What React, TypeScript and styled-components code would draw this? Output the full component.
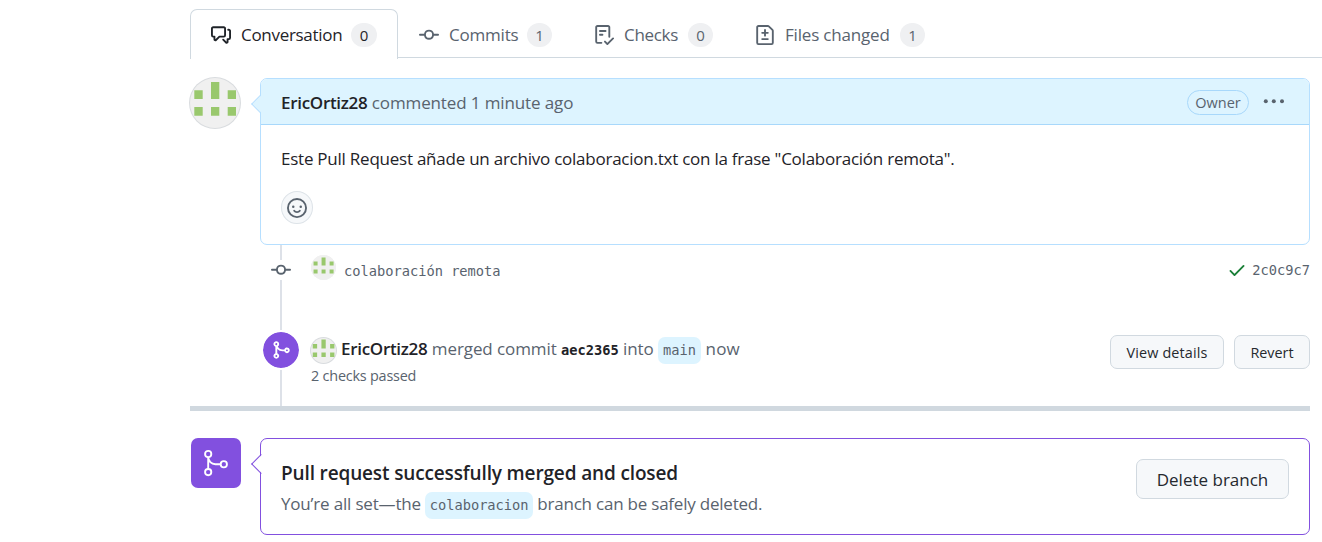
import React from 'react';
import styled, { createGlobalStyle, css } from 'styled-components';

const SANS = '"Open Sans", "Noto Sans", sans-serif';
const MONO = '"DejaVu Sans Mono", "Liberation Mono", monospace';

const GlobalStyle = createGlobalStyle`
  * { box-sizing: border-box; }
  body {
    margin: 0;
    background: #fff;
    color: #1f2328;
    font-family: ${SANS};
    font-size: 17px;
    overflow: hidden;
  }
`;

const Page = styled.main`
  width: 1322px;
  height: 542px;
  padding-left: 190px;
`;

const Icon = styled.svg`
  display: block;
  flex: none;
  fill: currentColor;
`;

/* One run of text; track is its letter-spacing, rise lifts it (or lowers it) inside a centred row */
const Text = styled.span<{ $size?: number; $track?: number; $weight?: number; $color?: string; $mono?: boolean; $rise?: number }>`
  white-space: pre;
  font-family: ${p => (p.$mono ? MONO : SANS)};
  font-size: ${p => p.$size ?? (p.$mono ? 13.7 : 17)}px;
  letter-spacing: ${p => p.$track ?? 0}px;
  font-weight: ${p => p.$weight ?? 400};
  color: ${p => p.$color ?? '#59636e'};
  padding-bottom: ${p => Math.max(0, p.$rise ?? 0) * 2}px;
  padding-top: ${p => Math.max(0, -(p.$rise ?? 0)) * 2}px;
`;

const TabBar = styled.nav`
  display: flex;
  height: 58px;
  padding-top: 9px;
  border-bottom: 1px solid #d0d9e0;
`;

const Tab = styled.div<{ $width: number; $active?: boolean }>`
  display: flex;
  align-items: center;
  width: ${p => p.$width}px;
  height: 50px;
  padding: 2px 0 0 21px;
  color: #59636e;
  ${p => p.$active && css`
    color: #1f2328;
    background: #fff;
    border: 1px solid #d0d9e0;
    border-bottom: 0;
    border-radius: 7px 7px 0 0;
    padding-left: 20px;
    padding-top: 1px;
  `}
`;

const TabLabel = styled.div<{ $width: number }>`
  width: ${p => p.$width}px;
  margin-left: 10px;
  line-height: 24px;
`;

const Counter = styled.span<{ $strong?: boolean }>`
  min-width: ${p => (p.$strong ? 26 : 25)}px;
  height: 24px;
  padding: 0 8px;
  border-radius: 12px;
  background: #eff0f2;
  color: ${p => (p.$strong ? '#1f2328' : '#59636e')};
  font-size: 15px;
  font-weight: 500;
  line-height: 24px;
  text-align: center;
`;

const Entry = styled.section<{ $top: number }>`
  display: flex;
  align-items: flex-start;
  width: 1120px;
  padding-top: ${p => p.$top}px;
`;

const AuthorSlot = styled.div`
  width: 70px;
  margin-top: -1px;
  margin-left: -1px;
  margin-right: 1px;
`;

const Bubble = styled.article<{ $line: string; $tip: string }>`
  position: relative;
  width: 1050px;
  border: 1px solid ${p => p.$line};
  border-radius: 7px;
  background: #fff;
  &::before {
    content: '';
    position: absolute;
    left: -7.5px;
    top: 17.5px;
    width: 13px;
    height: 13px;
    transform: rotate(45deg);
    border-left: 1px solid ${p => p.$line};
    border-bottom: 1px solid ${p => p.$line};
    background: linear-gradient(45deg, ${p => p.$tip} 51%, transparent 51%);
  }
`;

const BubbleHeader = styled.header`
  position: relative;
  display: flex;
  align-items: center;
  height: 46px;
  padding: 1px 22px 0 20px;
  background: #ddf4ff;
  border-bottom: 1px solid #a8d8fb;
  border-radius: 6px 6px 0 0;
`;

const OwnerBadge = styled.span`
  width: 62px;
  height: 25px;
  margin-left: auto;
  border: 1px solid #a8d8fb;
  border-radius: 13px;
  text-align: center;
  line-height: 22px;
`;

const BubbleBody = styled.div`
  height: 119px;
  padding: 20px 20px 0;
  line-height: 27px;
`;

const ReactionButton = styled.button`
  display: flex;
  align-items: center;
  justify-content: center;
  width: 32px;
  height: 33px;
  margin: 19px 0 0;
  padding: 0;
  border: 1px solid #dde3e8;
  border-radius: 50%;
  background: #f6f8fa;
  color: #59636e;
`;

const Timeline = styled.section`
  position: relative;
  width: 1120px;
  height: 161px;
  &::before {
    content: '';
    position: absolute;
    left: 90px;
    top: 0;
    bottom: 0;
    width: 2px;
    background: #dde1e8;
  }
`;

const CommitRow = styled.div`
  position: relative;
  display: flex;
  align-items: center;
  height: 87px;
  padding: 0 0 38px 81px;
`;

const CommitMark = styled.span`
  width: 20px;
  background: #fff;
  color: #59636e;
  margin-right: 20px;
`;

const CommitHash = styled.span`
  display: flex;
  align-items: center;
  gap: 5px;
  margin-left: auto;
  color: #1a7f37;
`;

const MergeRow = styled.div`
  position: relative;
  display: flex;
  align-items: flex-start;
  padding-left: 71px;
`;

const MergeMark = styled.span`
  display: flex;
  align-items: center;
  justify-content: center;
  width: 40px;
  height: 40px;
  margin-top: -2px;
  border: 2px solid #fff;
  border-radius: 50%;
  background: #8250df;
  background-clip: padding-box;
  color: #fff;
`;

const MergeInfo = styled.div`
  margin-left: 9px;
  padding-top: 3px;
`;

const MergeLine = styled.div`
  display: flex;
  align-items: center;
  height: 30px;
`;

const CheckLine = styled.div`
  height: 22px;
  padding-left: 1px;
  line-height: 20px;
`;

const Branch = styled.span<{ $width: number }>`
  display: inline-block;
  width: ${p => p.$width}px;
  height: 27px;
  border-radius: 7px;
  background: #ddf4ff;
  line-height: 24px;
  text-align: center;
`;

const Actions = styled.div`
  display: flex;
  gap: 10px;
  margin: 3px 0 0 auto;
`;

const Button = styled.button<{ $width: number; $height: number }>`
  width: ${p => p.$width}px;
  height: ${p => p.$height}px;
  padding: 1px 0 0;
  border: 1px solid #d1d9e0;
  border-radius: 7px;
  background: #f6f8fa;
  white-space: nowrap;
`;

const Divider = styled.div`
  width: 1120px;
  height: 5px;
  background: #d0d8df;
`;

const MergeTile = styled.div`
  display: flex;
  align-items: center;
  justify-content: center;
  width: 50px;
  height: 50px;
  margin: 0 19px 0 1px;
  border-radius: 7px;
  background: #8250df;
`;

const MergedBody = styled.div`
  display: flex;
  align-items: flex-start;
  height: 95px;
  padding: 20px 20px 0;
`;

const MergedTitle = styled.h3`
  margin: 0 0 5px;
  height: 28px;
  line-height: 28px;
`;

const MergedNote = styled.div`
  display: flex;
  align-items: center;
  height: 27px;
`;

const SummaryCol = styled.div`
  flex: 1;
`;

const MoreSlot = styled.span`
  margin-left: 12px;
  color: #59636e;
`;

const AvatarGap = styled.span<{ $gap: number; $rise?: number }>`
  margin-right: ${p => p.$gap}px;
  padding-bottom: ${p => (p.$rise ?? 0) * 2}px;
`;

const PATHS = {
  discussion: 'M1.75 1h8.5c.966 0 1.75.784 1.75 1.75v5.5A1.75 1.75 0 0 1 10.25 10H7.061l-2.574 2.573A1.458 1.458 0 0 1 2 11.543V10h-.25A1.75 1.75 0 0 1 0 8.25v-5.5C0 1.784.784 1 1.75 1ZM1.5 2.75v5.5c0 .138.112.25.25.25h1a.75.75 0 0 1 .75.75v2.19l2.72-2.72a.749.749 0 0 1 .53-.22h3.5a.25.25 0 0 0 .25-.25v-5.5a.25.25 0 0 0-.25-.25h-8.5a.25.25 0 0 0-.25.25Zm13 2a.25.25 0 0 0-.25-.25h-.5a.75.75 0 0 1 0-1.5h.5c.966 0 1.75.784 1.75 1.75v5.5A1.75 1.75 0 0 1 14.25 12H14v1.543a1.458 1.458 0 0 1-2.487 1.03L9.22 12.28a.749.749 0 0 1 .326-1.275.749.749 0 0 1 .734.215l2.22 2.22v-2.19a.75.75 0 0 1 .75-.75h1a.25.25 0 0 0 .25-.25Z',
  commit: 'M11.93 8.5a4.002 4.002 0 0 1-7.86 0H.75a.75.75 0 0 1 0-1.5h3.32a4.002 4.002 0 0 1 7.86 0h3.32a.75.75 0 0 1 0 1.5Zm-1.43-.75a2.5 2.5 0 1 0-5 0 2.5 2.5 0 0 0 5 0Z',
  checklist: 'M2.5 1.75v11.5c0 .138.112.25.25.25h3.17a.75.75 0 0 1 0 1.5H2.75A1.75 1.75 0 0 1 1 13.25V1.75C1 .784 1.784 0 2.75 0h8.5C12.216 0 13 .784 13 1.75v7.736a.75.75 0 0 1-1.5 0V1.75a.25.25 0 0 0-.25-.25h-8.5a.25.25 0 0 0-.25.25Zm13.274 9.537v-.001l-4.557 4.45a.75.75 0 0 1-1.055-.008l-1.943-1.95a.75.75 0 0 1 1.062-1.058l1.419 1.425 4.026-3.932a.75.75 0 1 1 1.048 1.074ZM4.75 4h4.5a.75.75 0 0 1 0 1.5h-4.5a.75.75 0 0 1 0-1.5ZM4 7.75A.75.75 0 0 1 4.75 7h2a.75.75 0 0 1 0 1.5h-2A.75.75 0 0 1 4 7.75Z',
  diff: 'M1 1.75C1 .784 1.784 0 2.75 0h7.586c.464 0 .909.184 1.237.513l2.914 2.914c.329.328.513.773.513 1.237v9.586A1.75 1.75 0 0 1 13.25 16H2.75A1.75 1.75 0 0 1 1 14.25Zm1.75-.25a.25.25 0 0 0-.25.25v12.5c0 .138.112.25.25.25h10.5a.25.25 0 0 0 .25-.25V4.664a.25.25 0 0 0-.073-.177l-2.914-2.914a.25.25 0 0 0-.177-.073ZM8 3.25a.75.75 0 0 1 .75.75v1.5h1.5a.75.75 0 0 1 0 1.5h-1.5v1.5a.75.75 0 0 1-1.5 0V7h-1.5a.75.75 0 0 1 0-1.5h1.5V4A.75.75 0 0 1 8 3.25Zm-3 8a.75.75 0 0 1 .75-.75h4.5a.75.75 0 0 1 0 1.5h-4.5a.75.75 0 0 1-.75-.75Z',
  merge: 'M5.45 5.154A4.25 4.25 0 0 0 9.25 7.5h1.378a2.251 2.251 0 1 1 0 1.5H9.25A5.734 5.734 0 0 1 5 7.123v3.505a2.25 2.25 0 1 1-1.5 0V5.372a2.25 2.25 0 1 1 1.95-.218ZM4.25 13.5a.75.75 0 1 0 0-1.5.75.75 0 0 0 0 1.5Zm8.5-4.5a.75.75 0 1 0 0-1.5.75.75 0 0 0 0 1.5ZM5 3.25a.75.75 0 1 0 0 .005V3.25Z',
  check: 'M13.78 4.22a.75.75 0 0 1 0 1.06l-7.25 7.25a.75.75 0 0 1-1.06 0L2.22 9.28a.751.751 0 0 1 .018-1.042.751.751 0 0 1 1.042-.018L6 10.94l6.72-6.72a.75.75 0 0 1 1.06 0Z',
};

function Octicon({ name }: { name: keyof typeof PATHS }) {
  return (
    <Icon width="20" height="20" viewBox="0 0 16 16">
      <path d={PATHS[name]} />
    </Icon>
  );
}

function Smiley() {
  return (
    <Icon width="20" height="20" viewBox="0 0 16 16">
      <circle cx="8" cy="8" r="7.25" fill="none" stroke="currentColor" strokeWidth="1.5" />
      <circle cx="5" cy="7" r="1" />
      <circle cx="11" cy="7" r="1" />
      <path d="M5.75 10.2c.5.7 1.3 1.05 2.25 1.05s1.75-.35 2.25-1.05" fill="none" stroke="currentColor" strokeWidth="1.5" strokeLinecap="round" />
    </Icon>
  );
}

function LargeMerge() {
  return (
    <Icon width="30" height="30" viewBox="0 0 24 24">
      <g fill="none" stroke="#fff" strokeWidth="1.5">
        <circle cx="5.75" cy="4.75" r="2.5" />
        <circle cx="5.75" cy="19.25" r="2.5" />
        <circle cx="18.25" cy="13" r="2.5" />
        <path d="M5.75 7.25v9.5M5.75 7.25c0 3.2 2.6 5.75 5.75 5.75h4.25" />
      </g>
    </Icon>
  );
}

function Kebab() {
  return (
    <Icon width="26" height="20" viewBox="0 0 26 20">
      <circle cx="4.8" cy="9.3" r="2" />
      <circle cx="12.8" cy="9.3" r="2" />
      <circle cx="21" cy="9.3" r="2" />
    </Icon>
  );
}

function Avatar({ size, ring = true }: { size: number; ring?: boolean }) {
  return (
    <Icon width={size} height={size} viewBox="0 0 52 52">
      <circle cx="26" cy="26" r="26" fill={ring ? '#d9dcdf' : '#f0f0f0'} />
      <circle cx="26" cy="26" r={ring ? 26 - 52 / size : 26} fill="#f0f0f0" />
      <path
        fill="#99c86d"
        d="M22 5h8.3v17H22zM5.3 13.3h8.4V22H5.3zM38.7 13.3H47V22h-8.3zM5.3 30h8.4v8.7H5.3zM22 30h8.3v8.7H22zM38.7 30H47v8.7h-8.3z"
      />
    </Icon>
  );
}

export default function App() {
  return (
    <Page>
      <GlobalStyle />
      <TabBar>
        <Tab $width={208} $active>
          <Octicon name="discussion" />
          <TabLabel $width={110}><Text $track={-0.3} $color="#1f2328">Conversation</Text></TabLabel>
          <Counter $strong>0</Counter>
        </Tab>
        <Tab $width={175}>
          <Octicon name="commit" />
          <TabLabel $width={78}><Text $track={-0.2}>Commits</Text></TabLabel>
          <Counter>1</Counter>
        </Tab>
        <Tab $width={161}>
          <Octicon name="checklist" />
          <TabLabel $width={64}><Text $track={-0.3}>Checks</Text></TabLabel>
          <Counter>0</Counter>
        </Tab>
        <Tab $width={200}>
          <Octicon name="diff" />
          <TabLabel $width={115}><Text $track={-0.18}>Files changed</Text></TabLabel>
          <Counter>1</Counter>
        </Tab>
      </TabBar>

      <Entry $top={20}>
        <AuthorSlot><Avatar size={52} /></AuthorSlot>
        <Bubble $line="#b6dfff" $tip="#ddf4ff">
          <BubbleHeader>
            <Text $weight={600} $track={-0.3} $color="#1f2328">EricOrtiz28</Text>
            <Text $track={-0.12}> commented 1 minute ago</Text>
            <OwnerBadge><Text $size={14.5} $weight={500}>Owner</Text></OwnerBadge>
            <MoreSlot><Kebab /></MoreSlot>
          </BubbleHeader>
          <BubbleBody>
            <Text $track={-0.24} $color="#1f2328">Este Pull Request añade un archivo colaboracion.txt con la frase "Colaboración remota".</Text>
            <ReactionButton aria-label="Add reaction"><Smiley /></ReactionButton>
          </BubbleBody>
        </Bubble>
      </Entry>

      <Timeline>
        <CommitRow>
          <CommitMark><Octicon name="commit" /></CommitMark>
          <AvatarGap $gap={8} $rise={2}><Avatar size={25} ring={false} /></AvatarGap>
          <Text $mono $rise={-1}>colaboración remota</Text>
          <CommitHash>
            <Octicon name="check" />
            <Text $mono $rise={-0.5}>2c0c9c7</Text>
          </CommitHash>
        </CommitRow>
        <MergeRow>
          <MergeMark><Octicon name="merge" /></MergeMark>
          <MergeInfo>
            <MergeLine>
              <AvatarGap $gap={4}><Avatar size={27} /></AvatarGap>
              <Text $rise={1.5} $weight={600} $track={-0.3} $color="#1f2328">EricOrtiz28</Text>
              <Text $rise={1.5} $track={-0.09}> merged commit </Text>
              <Text $mono $weight={700} $color="#1f2328">aec2365</Text>
              <Text $rise={1.5} $track={-0.07}> into </Text>
              <Branch $width={43}><Text $mono>main</Text></Branch>
              <Text $rise={1.5} $track={0.1}> now</Text>
            </MergeLine>
            <CheckLine><Text $size={14.4} $track={-0.2}>2 checks passed</Text></CheckLine>
          </MergeInfo>
          <Actions>
            <Button $width={114} $height={34}><Text $size={14.4} $track={0.14} $weight={500} $color="#25292e">View details</Text></Button>
            <Button $width={76} $height={34}><Text $size={14.4} $weight={500} $color="#25292e">Revert</Text></Button>
          </Actions>
        </MergeRow>
      </Timeline>
      <Divider />

      <Entry $top={27}>
        <MergeTile><LargeMerge /></MergeTile>
        <Bubble $line="#8250df" $tip="#fff">
          <MergedBody>
            <SummaryCol>
              <MergedTitle><Text $size={19} $track={-0.14} $weight={550} $color="#1f2328">Pull request successfully merged and closed</Text></MergedTitle>
              <MergedNote>
                <Text $rise={2} $track={-0.18}>You’re all set—the </Text>
                <Branch $width={108}><Text $mono>colaboracion</Text></Branch>
                <Text $rise={2} $track={-0.22}> branch can be safely deleted.</Text>
              </MergedNote>
            </SummaryCol>
            <Button $width={153} $height={40}><Text $weight={500} $color="#25292e">Delete branch</Text></Button>
          </MergedBody>
        </Bubble>
      </Entry>
    </Page>
  );
}
